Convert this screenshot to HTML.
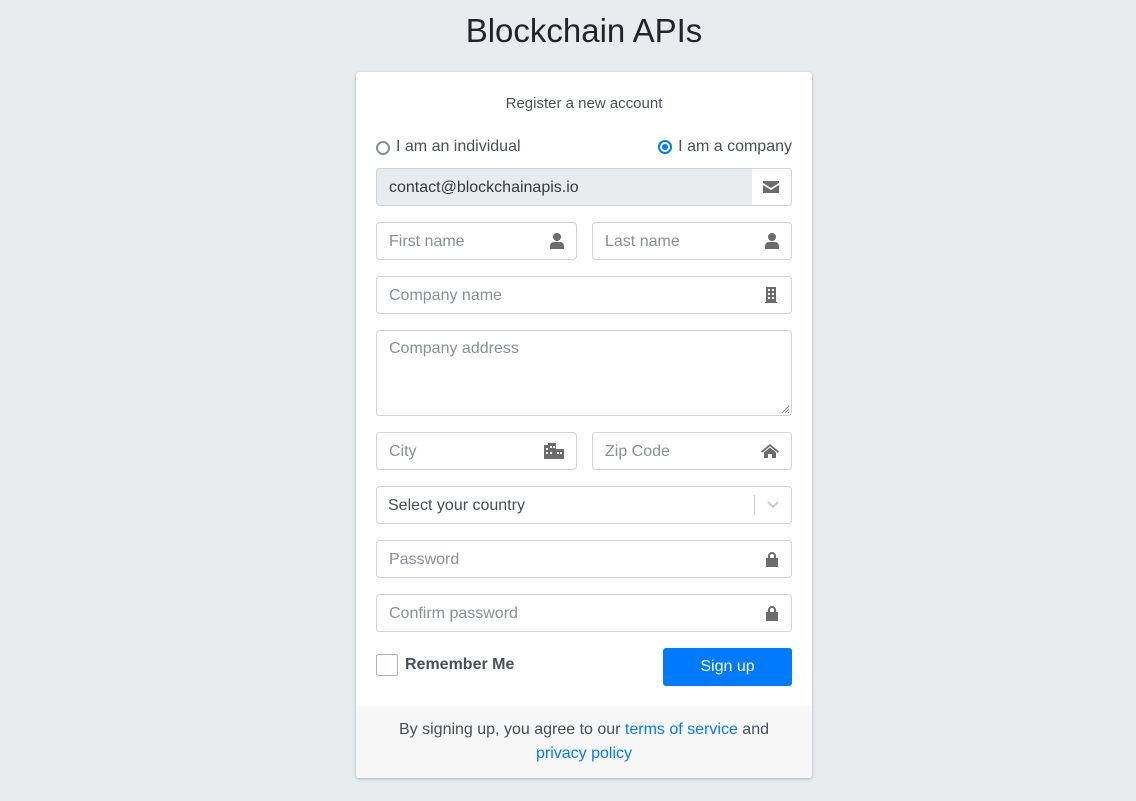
<!DOCTYPE html>
<html><head><style>
*{box-sizing:border-box;margin:0;padding:0}
body{width:1136px;height:801px;background:#e9ecef;font-family:"Liberation Sans",sans-serif;color:#495057;position:relative;overflow:hidden}
h1{position:absolute;top:12px;left:384px;width:400px;text-align:center;font-weight:400;font-size:33px;color:#212529}
.card{position:absolute;left:356px;top:72px;width:456px;height:706px;background:#fff;border-radius:3px;box-shadow:0 1px 3px rgba(0,0,0,.25);overflow:hidden}
.abs{position:absolute}
.in{position:absolute;height:38px;border:1px solid #ced4da;border-radius:4px;background:#fff;font-size:16px;color:#8a9096;padding:0 12px;line-height:38px}
.ic{position:absolute;right:12px;top:10px}
.foot{position:absolute;left:0;top:634px;width:456px;height:72px;background:#f7f7f7;text-align:center;font-size:16px;line-height:24px;padding-top:12px;color:#495057}
a{color:#007bff;text-decoration:none}
</style></head><body>
<h1>Blockchain APIs</h1>
<div class="card">
<div class="abs" style="top:23px;width:456px;text-align:center;font-size:15px;color:#495057">Register a new account</div>
<div class="abs" style="left:20px;top:69px;width:14px;height:14px;border:2px solid #868e96;border-radius:50%"></div>
<div class="abs" style="left:40px;top:66px;font-size:16px">I am an individual</div>
<div class="abs" style="right:20px;top:66px;font-size:16px;display:flex;align-items:center;gap:6px"><div style="width:14px;height:14px;border:2px solid #007bff;border-radius:50%"><div style="margin:2px;width:6px;height:6px;border-radius:50%;background:#007bff"></div></div>I am a company</div>
<div class="in" style="left:20px;top:96px;width:416px;background:#e9ecef;color:#343a40">contact@blockchainapis.io
<div class="abs" style="right:0;top:0;width:39px;height:36px;background:#fff;border-radius:0 4px 4px 0"><svg class="ic" style="right:12px;top:12px" width="16" height="12" viewBox="0 0 16 12"><path d="M0 0h16v2L8 7 0 2z M0 4l8 5 8-5v8H0z" fill="#6c6c6c"/></svg></div></div>
<div class="in" style="left:20px;top:150px;width:201px">First name<svg class="ic" width="14" height="16" viewBox="0 0 14 16"><circle cx="7" cy="4" r="4" fill="#6c6c6c"/><path d="M0 16v-3a4 4 0 0 1 4-4h6a4 4 0 0 1 4 4v3z" fill="#6c6c6c"/></svg></div>
<div class="in" style="left:236px;top:150px;width:200px">Last name<svg class="ic" width="14" height="16" viewBox="0 0 14 16"><circle cx="7" cy="4" r="4" fill="#6c6c6c"/><path d="M0 16v-3a4 4 0 0 1 4-4h6a4 4 0 0 1 4 4v3z" fill="#6c6c6c"/></svg></div>
<div class="in" style="left:20px;top:204px;width:416px">Company name<svg class="ic" style="right:14px" width="12" height="16" viewBox="0 0 12 16"><path d="M1 0h10v15h1v1H0v-1h1z" fill="#6c6c6c"/><g fill="#fff"><rect x="3" y="2" width="2" height="2"/><rect x="7" y="2" width="2" height="2"/><rect x="3" y="6" width="2" height="2"/><rect x="7" y="6" width="2" height="2"/><rect x="3" y="10" width="2" height="2"/><rect x="7" y="10" width="2" height="2"/></g></svg></div>
<div class="in" style="left:20px;top:258px;width:416px;height:86px;line-height:36px">Company address<svg class="abs" style="right:1px;bottom:1px" width="9" height="9" viewBox="0 0 9 9"><path d="M8 1 1 8M8 4 4 8M8 7 7 8" stroke="#888" stroke-width="1"/></svg></div>
<div class="in" style="left:20px;top:360px;width:201px">City<svg class="ic" width="20" height="16" viewBox="0 0 20 16"><path d="M0 2h4V0h8v6h8v10H0z" fill="#6c6c6c"/><g fill="#fff"><rect x="2" y="5" width="2" height="2"/><rect x="6" y="3" width="2" height="2"/><rect x="9" y="3" width="2" height="2"/><rect x="2" y="9" width="2" height="2"/><rect x="6" y="9" width="2" height="2"/><rect x="13" y="9" width="2" height="2"/><rect x="16" y="9" width="2" height="2"/></g></svg></div>
<div class="in" style="left:236px;top:360px;width:200px">Zip Code<svg class="ic" width="18" height="16" viewBox="0 0 18 16"><path d="M9 1 0 8.5l1.2 1.3L9 3.3l7.8 6.5L18 8.5z M3 9.5 9 4.5l6 5V15h-4v-4H7v4H3z" fill="#6c6c6c"/></svg></div>
<div class="in" style="left:20px;top:414px;width:416px;color:#495057;padding-left:11px">Select your country<div class="abs" style="right:36px;top:8px;width:1px;height:20px;background:#ccc"></div><svg class="ic" style="top:14px" width="12" height="8" viewBox="0 0 12 8"><path d="M1 1l5 5 5-5" stroke="#ccc" stroke-width="2" fill="none"/></svg></div>
<div class="in" style="left:20px;top:468px;width:416px">Password<svg class="ic" width="14" height="16" viewBox="0 0 14 16"><path d="M3 7V5a4 4 0 0 1 8 0v2h-2V5a2 2 0 0 0-4 0v2z M1 7h12v9H1z" fill="#6c6c6c"/></svg></div>
<div class="in" style="left:20px;top:522px;width:416px">Confirm password<svg class="ic" width="14" height="16" viewBox="0 0 14 16"><path d="M3 7V5a4 4 0 0 1 8 0v2h-2V5a2 2 0 0 0-4 0v2z M1 7h12v9H1z" fill="#6c6c6c"/></svg></div>
<div class="abs" style="left:20px;top:582px;width:22px;height:22px;border:1px solid #adb5bd;border-radius:2px"></div>
<div class="abs" style="left:49px;top:584px;font-size:16px;font-weight:700;color:#495057">Remember Me</div>
<div class="abs" style="left:307px;top:576px;width:129px;height:38px;background:#007bff;border-radius:3px;color:#fff;font-size:16px;text-align:center;line-height:38px">Sign up</div>
<div class="foot">By signing up, you agree to our <a>terms of service</a> and<br><a>privacy policy</a></div>
</div>
</body></html>
